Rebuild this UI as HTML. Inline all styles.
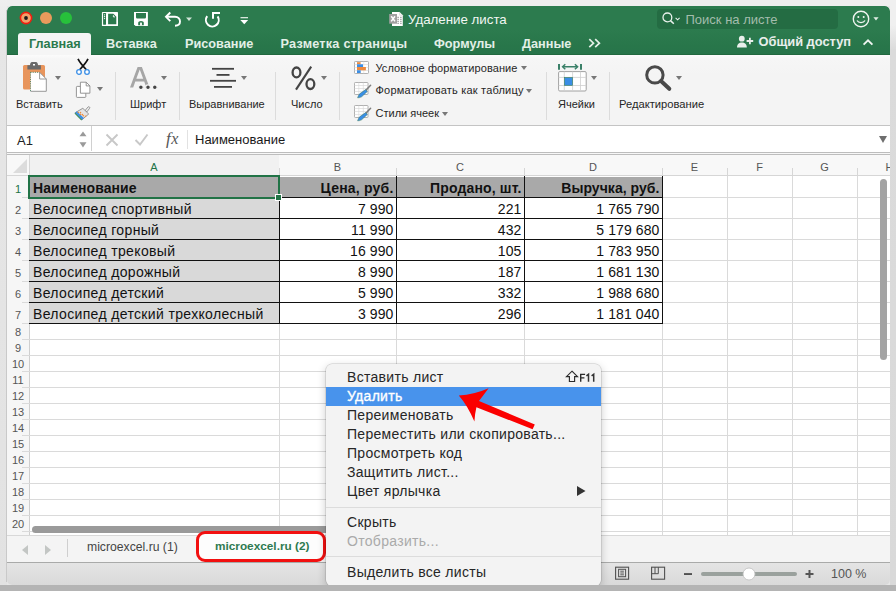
<!DOCTYPE html>
<html><head><meta charset="utf-8">
<style>
*{box-sizing:border-box;margin:0;padding:0}
html,body{width:896px;height:591px;overflow:hidden}
body{position:relative;background:#e6e6e6;font-family:"Liberation Sans",sans-serif;color:#222}
.a{position:absolute}
.t{position:absolute;white-space:nowrap;line-height:1}
#win{position:absolute;left:7px;top:6px;width:883px;height:579px;border-radius:5px;overflow:hidden;background:#f3f3f3}
#outbottom{position:absolute;left:0;top:585px;width:896px;height:6px;background:#b4b4b4}
#outleft{position:absolute;left:0;top:0;width:7px;height:591px;background:linear-gradient(#efefef 0px,#e6e6e6 40px,#e2e2e2 591px)}
#outtop{position:absolute;left:0;top:0;width:896px;height:6px;background:#eeeeee}
#outright{position:absolute;left:890px;top:0;width:6px;height:591px;background:linear-gradient(#f0f0f0 0px,#f0f0f0 25px,#dbdbdb 50px,#d9d9d9 591px)}
.green{background:#2b7a4d}
.tab{position:absolute;top:38px;font-size:12.7px;font-weight:bold;color:#e3efe7;white-space:nowrap;line-height:1}
.rib{position:absolute;font-size:11px;color:#262626;white-space:nowrap;line-height:1}
.sep{position:absolute;top:72px;width:1px;height:48px;background:#dcdcdc}
.dd{position:absolute;width:0;height:0;border-left:3px solid transparent;border-right:3px solid transparent;border-top:4.5px solid #777}
.vl{position:absolute;top:176px;width:1px;height:360px;background:#dadada}
.hl{position:absolute;left:22px;height:1px;width:868px;background:#dadada}
.rn{position:absolute;left:7px;width:22px;text-align:center;font-size:11px;color:#555;line-height:1}
.cell{position:absolute;font-size:14px;white-space:nowrap;line-height:1;color:#111;letter-spacing:0.35px}
.num{text-align:right;letter-spacing:0.1px}
.mi{position:absolute;left:347px;font-size:14px;color:#262626;white-space:nowrap;line-height:1;letter-spacing:0.3px}
</style></head><body>
<div id="outtop"></div><div id="outleft"></div><div id="outright"></div><div id="outbottom"></div><div class="a" style="left:6px;top:10px;width:1px;height:572px;background:#c9c9c9"></div>
<div id="wc" style="position:absolute;left:0;top:0;width:896px;height:591px;clip-path:inset(6px 6px 6px 7px round 5px)">
<div id="win">
  <!-- green header -->
  <div class="a" style="left:0;top:0;width:883px;height:49px;background:linear-gradient(#2c7b4e 0px,#2c7b4e 24px,#28764a 40px,#27744a 49px)"></div>
</div>

<!-- traffic lights -->
<svg class="a" style="left:18px;top:10px" width="60" height="16" viewBox="0 0 60 16">
  <circle cx="8" cy="8" r="5.6" fill="#f2a06a" stroke="#f01e10" stroke-width="1.6"/>
  <circle cx="8" cy="8" r="1.9" fill="#1a1a1a"/>
  <circle cx="28" cy="8" r="6" fill="#e99a5c"/>
  <circle cx="48" cy="8" r="6" fill="#27c03b"/>
</svg>
<!-- quick access icons -->
<svg class="a" style="left:100px;top:10px" width="152" height="18" viewBox="0 0 152 18">
  <!-- sidebar doc icon -->
  <rect x="1.9" y="2" width="16.1" height="14.1" rx="0.7" fill="#fff"/>
  <rect x="3.1" y="3.1" width="2.9" height="11.6" rx="0.4" fill="#2b7a4d"/>
  <circle cx="4.55" cy="4.8" r="0.65" fill="#fff"/><circle cx="4.55" cy="6.7" r="0.65" fill="#fff"/><circle cx="4.55" cy="8.6" r="0.65" fill="#fff"/>
  <path d="M8.1 3.8 H13.4 L16.3 6.7 V14.3 H8.1 Z" fill="#2b7a4d"/>
  <path d="M13.4 5.2 V6.9 H15" fill="none" stroke="#fff" stroke-width="0.9"/>
  <!-- save -->
  <path d="M34 2 H47.9 V16.1 H35.5 L34 14.6 Z" fill="#fff"/>
  <path d="M36 3 H46 V7 C46 8 45.3 8.6 44.5 8.6 H37.5 C36.7 8.6 36 8 36 7 Z" fill="#2b7a4d"/>
  <path d="M38.2 15.3 V12.8 C38.2 11.6 39.5 10.9 41 10.9 C42.5 10.9 43.8 11.6 43.8 12.8 V15.3 Z" fill="#2b7a4d"/>
  <rect x="40.1" y="12.6" width="1.8" height="2.8" fill="#fff"/>
  <!-- undo -->
  <path d="M66 6.8 H75 C78.2 6.8 80 9 80 11.6 C80 14.2 78.2 15.8 75 15.8" fill="none" stroke="#fff" stroke-width="1.9"/>
  <path d="M70.3 2.5 L66 6.8 L70.3 11.1" fill="none" stroke="#fff" stroke-width="1.9"/>
  <path d="M86 7.6 H92 L89 11 Z" fill="#d0e4d7"/>
  <!-- redo circular -->
  <path d="M107.2 6.2 A6.4 6.4 0 1 0 117.6 6.4" fill="none" stroke="#fff" stroke-width="2"/>
  <path d="M113 8.8 V3 H120" fill="none" stroke="#fff" stroke-width="2"/>
  <!-- customize -->
  <rect x="140.5" y="7" width="7.5" height="1.3" fill="#d7e7dc"/>
  <path d="M140.3 10 H148.2 L144.25 14.2 Z" fill="#fff"/>
</svg>

<!-- title -->
<svg class="a" style="left:388px;top:11px" width="16" height="16" viewBox="0 0 16 16">
  <path d="M4 0.9 H11.6 L14.8 4.2 V14.9 H4 Z" fill="#fff"/>
  <path d="M11.6 0.9 V4.2 H14.8" fill="none" stroke="#ccc" stroke-width="0.6"/>
  <g fill="#9a9a9a"><rect x="9.3" y="5.8" width="1.7" height="1"/><rect x="12" y="5.8" width="1.7" height="1"/><rect x="9.3" y="7.8" width="1.7" height="1"/><rect x="12" y="7.8" width="1.7" height="1"/><rect x="9.3" y="9.8" width="1.7" height="1"/><rect x="12" y="9.8" width="1.7" height="1"/><rect x="9.3" y="11.8" width="1.7" height="1"/><rect x="12" y="11.8" width="1.7" height="1"/></g>
  <rect x="1.2" y="3" width="7.8" height="9.7" fill="#a0a0a0"/>
  <path d="M3.2 5.3 L7 10.4 M7 5.3 L3.2 10.4" stroke="#fff" stroke-width="1.5"/>
</svg>
<div class="t" style="left:408px;top:13px;font-size:13.3px;color:#f2f7f3">Удаление листа</div>

<!-- search -->
<div class="a" style="left:657px;top:9px;width:181px;height:20px;border-radius:4px;background:#246c43"></div>
<svg class="a" style="left:660px;top:11px" width="22" height="16" viewBox="0 0 22 16">
  <circle cx="7.4" cy="6.4" r="4.4" fill="none" stroke="#e9f1ec" stroke-width="1.3"/>
  <path d="M10.5 9.6 L13.8 12.8" stroke="#e9f1ec" stroke-width="1.5"/>
  <path d="M15.6 6.8 L17.6 8.8 L19.6 6.8" fill="none" stroke="#e9f1ec" stroke-width="1.1"/>
</svg>
<div class="t" style="left:685.5px;top:13px;font-size:13px;color:#a3bcac">Поиск на листе</div>
<!-- smiley -->
<svg class="a" style="left:850px;top:9px" width="32" height="20" viewBox="0 0 32 20">
  <circle cx="11" cy="10" r="7.7" fill="none" stroke="#f0f5f1" stroke-width="1.4"/>
  <circle cx="8.3" cy="8" r="1" fill="#f0f5f1"/><circle cx="13.7" cy="8" r="1" fill="#f0f5f1"/>
  <path d="M7 11.5 C8.5 14.3 13.5 14.3 15 11.5" fill="none" stroke="#f0f5f1" stroke-width="1.3"/>
  <path d="M23.4 8.3 H28.6 L26 11.6 Z" fill="#e0ece4"/>
</svg>

<!-- tabs -->
<div class="a" style="left:7px;top:54px;width:883px;height:1px;background:#22683f"></div>
<div class="a" style="left:18px;top:33px;width:73px;height:23px;background:#f5f5f5;border-radius:3px 3px 0 0"></div>
<div class="tab" style="left:29px;color:#2b7a4d">Главная</div>
<div class="tab" style="left:106px">Вставка</div>
<div class="tab" style="left:185px">Рисование</div>
<div class="tab" style="left:280.5px;letter-spacing:0.22px">Разметка страницы</div>
<div class="tab" style="left:434px">Формулы</div>
<div class="tab" style="left:522px">Данные</div>
<svg class="a" style="left:587px;top:37px" width="16" height="12" viewBox="0 0 16 12">
  <path d="M2.3 2.2 L6.5 6.2 L2.3 10.2 M8.2 2.2 L12.4 6.2 L8.2 10.2" fill="none" stroke="#e3efe7" stroke-width="1.7"/>
</svg>
<svg class="a" style="left:736px;top:35px" width="20" height="16" viewBox="0 0 20 16">
  <circle cx="5.8" cy="3.7" r="2.9" fill="#e9efeb"/>
  <path d="M1 12.6 C1 9 3 7.4 5.9 7.4 C8.8 7.4 10.8 9 10.8 12.6 Z" fill="#e9efeb"/>
  <path d="M10.6 6 H17.2 M13.9 2.7 V9.3" stroke="#e9efeb" stroke-width="1.8"/>
</svg>
<div class="tab" style="left:758.5px;top:36.2px;font-size:12.85px;color:#e9efeb">Общий доступ</div>
<svg class="a" style="left:861px;top:37px" width="14" height="10" viewBox="0 0 14 10">
  <path d="M2.6 7.6 L7 3.3 L11.4 7.6" fill="none" stroke="#eef4f0" stroke-width="1.9"/>
</svg>

<!-- ribbon -->
<div class="a" style="left:7px;top:55px;width:883px;height:70px;background:linear-gradient(#fbfbfb 0px,#f6f6f6 4px,#f4f4f4 20px)"></div>
<div class="a" style="left:7px;top:125px;width:883px;height:1px;background:#c4c4c4"></div>
<div class="sep" style="left:115px"></div>
<div class="sep" style="left:179px"></div>
<div class="sep" style="left:275px"></div>
<div class="sep" style="left:339px"></div>
<div class="sep" style="left:546px"></div>
<div class="sep" style="left:609px"></div>

<!-- paste icon -->
<svg class="a" style="left:20px;top:60px" width="32" height="34" viewBox="0 0 32 34">
  <rect x="3" y="5" width="22" height="24.6" rx="1.5" fill="#e8955c"/>
  <path d="M7.4 5.2 H10 C10 3.5 10.8 2 12 2 H16 C17.2 2 18 3.5 18 5.2 H20.9 V9.6 H7.4 Z" fill="#6a6a6a"/>
  <rect x="13" y="4" width="2" height="1.5" fill="#fff"/>
  <path d="M10.5 12.3 H19.6 L26.3 19 V31.3 H10.5 Z" fill="#fff"/>
  <path d="M10.5 31.3 H26.3 V19 L19.6 12.3 V19 H26.3" fill="none" stroke="#8d8d8d" stroke-width="0.9"/>
  <path d="M10.5 12.3 V31 M10.5 12.3 H19.6" stroke="#3d7a5a" stroke-width="0.9" stroke-dasharray="1 1.2"/>
</svg>
<div class="dd" style="left:55px;top:75.8px"></div>
<div class="rib" style="left:16px;top:99px">Вставить</div>
<!-- scissors -->
<svg class="a" style="left:72px;top:57px" width="22" height="19" viewBox="0 0 22 19">
  <path d="M6 1.8 C7 4 9.5 7.5 14.6 13 M16 1.8 C15 4 12.5 7.5 7.4 13" fill="none" stroke="#111" stroke-width="1.7"/>
  <circle cx="7" cy="15" r="2.3" fill="#fff" stroke="#3a8ee6" stroke-width="1.3"/>
  <circle cx="15" cy="15" r="2.3" fill="#fff" stroke="#3a8ee6" stroke-width="1.3"/>
</svg>
<!-- copy -->
<svg class="a" style="left:74px;top:80px" width="20" height="19" viewBox="0 0 20 19">
  <rect x="2.4" y="6.4" width="9.4" height="11" rx="0.8" fill="#fff" stroke="#8a8a8a" stroke-width="0.9"/>
  <path d="M6.4 2.2 H12.2 L15.9 5.9 V13.2 H6.4 Z" fill="#fff" stroke="#8a8a8a" stroke-width="0.9"/>
  <path d="M12.2 2.2 V5.9 H15.9" fill="none" stroke="#8a8a8a" stroke-width="0.9"/>
</svg>
<div class="dd" style="left:97px;top:87px"></div>
<!-- brush -->
<svg class="a" style="left:73px;top:104px" width="20" height="18" viewBox="0 0 20 18">
  <path d="M12.2 6.4 L15 3 C15.8 2.1 17.4 3.3 16.6 4.3 L13.9 7.9 Z" fill="#efefef" stroke="#808080" stroke-width="0.8"/>
  <path d="M9.8 4.3 L15.7 10 L9 15.7 L2.2 8.7 Z" fill="#e4e4e4" stroke="#7d7d7d" stroke-width="0.8"/>
  <path d="M2.2 8.7 L9 15.7 L10.8 14.1 L3.9 7.2 Z" fill="#3b8fe8"/>
  <path d="M1.9 9.2 L8.7 16.2" stroke="#3d8a5a" stroke-width="1.1"/>
  <g fill="#ef8d3c"><circle cx="5.3" cy="8.5" r="0.8"/><circle cx="7.5" cy="8.5" r="0.8"/><circle cx="7.5" cy="10.4" r="0.8"/><circle cx="9.4" cy="10.6" r="0.8"/><circle cx="10.4" cy="11.7" r="0.8"/><circle cx="12.5" cy="12.3" r="0.8"/></g>
</svg>

<!-- font -->
<svg class="a" style="left:124px;top:60px" width="40" height="32" viewBox="124 60 40 32">
  <path fill-rule="evenodd" fill="#a6a6a6" d="M130 87.5 L137.6 67.1 H141.9 L149.5 87.5 H146.3 L144.2 81.5 H135.3 L133.2 87.5 Z M136.3 78.7 H143.2 L139.75 69.6 Z"/>
  <g fill="#454545" stroke="#f4f4f4" stroke-width="1.1"><circle cx="140.9" cy="87.2" r="2.3"/><circle cx="148" cy="87.2" r="2.3"/><circle cx="154.8" cy="87.2" r="2.3"/></g>
</svg>
<div class="dd" style="left:161px;top:75.8px"></div>
<div class="rib" style="left:130px;top:99px">Шрифт</div>

<!-- alignment -->
<svg class="a" style="left:208px;top:66px" width="30" height="24" viewBox="0 0 30 24">
  <rect x="4" y="1.9" width="22" height="1.8" fill="#444"/>
  <rect x="8.5" y="8" width="13" height="1.8" fill="#444"/>
  <rect x="2" y="13.9" width="26" height="1.8" fill="#444"/>
  <rect x="6" y="20" width="18" height="1.8" fill="#444"/>
</svg>
<div class="dd" style="left:241px;top:75.8px"></div>
<div class="rib" style="left:189px;top:99px">Выравнивание</div>

<!-- number -->
<svg class="a" style="left:286px;top:63px" width="34" height="30" viewBox="286 63 34 30">
  <ellipse cx="296.5" cy="72.4" rx="3.9" ry="4.9" fill="none" stroke="#444" stroke-width="2.3"/>
  <ellipse cx="310.4" cy="84.1" rx="3.9" ry="4.9" fill="none" stroke="#444" stroke-width="2.3"/>
  <path d="M311.2 66.6 L296 89.7" stroke="#444" stroke-width="2.1"/>
</svg>
<div class="dd" style="left:321px;top:75.8px"></div>
<div class="rib" style="left:291px;top:99px">Число</div>

<!-- styles -->
<svg class="a" style="left:353px;top:60px" width="18" height="15" viewBox="0 0 18 15">
  <rect x="1.5" y="1.5" width="14" height="12" rx="0.8" fill="#fff" stroke="#a8a8a8" stroke-width="0.9"/>
  <path d="M6.2 1.5 V13.5 M10.8 1.5 V13.5 M1.5 4.5 H15.5 M1.5 7.5 H15.5 M1.5 10.5 H15.5" stroke="#dadada" stroke-width="0.6"/>
  <rect x="4" y="2.2" width="3.6" height="2.1" fill="#ee8a3e"/>
  <rect x="4" y="4.3" width="6" height="2.7" fill="#3a8ee6"/>
  <rect x="4" y="7" width="8.9" height="3.3" fill="#ee8a3e"/>
  <rect x="4" y="10.3" width="3.7" height="2.7" fill="#3a8ee6"/>
</svg>
<div class="rib" style="left:375.5px;top:62.5px;letter-spacing:0.09px">Условное форматирование</div>
<div class="dd" style="left:521px;top:65.5px;border-left-width:3px;border-right-width:3px;border-top-width:4px"></div>
<svg class="a" style="left:353px;top:82px" width="19" height="17" viewBox="0 0 19 17">
  <rect x="1.5" y="0.5" width="13.5" height="12" rx="0.8" fill="#fff" stroke="#a8a8a8" stroke-width="0.9"/>
  <path d="M1.5 3.5 H15 M1.5 6.5 H15 M1.5 9.5 H15 M5.8 0.5 V12.5 M10.3 0.5 V12.5" stroke="#d5d5d5" stroke-width="0.6"/>
  <path d="M17.6 3.2 L12.6 8.6" stroke="#7d7d7d" stroke-width="1.5" stroke-linecap="round"/>
  <path d="M12.6 7.6 L14.4 9.4 L8.6 14.8 C7.2 15.6 5.6 15.9 4.6 15.8 C5 14.5 5.6 13.1 6.9 11.6 Z" fill="#3a8ee6" stroke="#3d7a5a" stroke-width="0.5"/>
</svg>
<div class="rib" style="left:375.5px;top:85.3px;letter-spacing:0.2px">Форматировать как таблицу</div>
<div class="dd" style="left:526px;top:89px;border-left-width:3px;border-right-width:3px;border-top-width:4px"></div>
<svg class="a" style="left:353px;top:105px" width="19" height="17" viewBox="0 0 19 17">
  <rect x="1.5" y="0.5" width="13.5" height="12" rx="0.8" fill="#fff" stroke="#a8a8a8" stroke-width="0.9"/>
  <path d="M1.5 3.5 H15 M1.5 6.5 H15 M1.5 9.5 H15 M5.8 0.5 V12.5 M10.3 0.5 V12.5" stroke="#d5d5d5" stroke-width="0.6"/>
  <path d="M17.6 3.2 L12.6 8.6" stroke="#7d7d7d" stroke-width="1.5" stroke-linecap="round"/>
  <path d="M12.6 7.6 L14.4 9.4 L8.6 14.8 C7.2 15.6 5.6 15.9 4.6 15.8 C5 14.5 5.6 13.1 6.9 11.6 Z" fill="#3a8ee6" stroke="#3d7a5a" stroke-width="0.5"/>
</svg>
<div class="rib" style="left:375.5px;top:108px">Стили ячеек</div>
<div class="dd" style="left:442px;top:112px;border-left-width:3px;border-right-width:3px;border-top-width:4px"></div>

<!-- cells -->
<svg class="a" style="left:556px;top:62px" width="34" height="32" viewBox="0 0 34 32">
  <path d="M3 2 V7.7 M25 2 V7.7" stroke="#3a8068" stroke-width="2"/>
  <path d="M7 4.8 H21.2" stroke="#3a8068" stroke-width="1.6"/>
  <path d="M9.3 2.3 L6.6 4.8 L9.3 7.3 M18.9 2.3 L21.6 4.8 L18.9 7.3" fill="none" stroke="#3a8068" stroke-width="1.5"/>
  <rect x="2.6" y="9.6" width="27.6" height="19.4" rx="1.2" fill="#fff" stroke="#a0a0a0" stroke-width="1"/>
  <path d="M2.6 15.4 H30.2 M2.6 23.5 H30.2 M8.3 9.6 V29 M16.6 9.6 V29 M24.5 9.6 V29" stroke="#cfcfcf" stroke-width="0.8"/>
  <rect x="8.5" y="15.6" width="7.9" height="7.7" fill="#3a8ee6" stroke="#3a8068" stroke-width="0.7"/>
</svg>
<div class="dd" style="left:591px;top:75.8px"></div>
<div class="rib" style="left:558px;top:99px">Ячейки</div>

<!-- editing -->
<svg class="a" style="left:643px;top:64px" width="30" height="28" viewBox="0 0 30 28">
  <circle cx="11.9" cy="10.9" r="8.2" fill="none" stroke="#4a4a4a" stroke-width="3"/>
  <path d="M18 17 L26.3 24.8" stroke="#4a4a4a" stroke-width="4" stroke-linecap="round"/>
</svg>
<div class="dd" style="left:676px;top:75.8px"></div>
<div class="rib" style="left:619px;top:99px;font-size:11.2px">Редактирование</div>

<!-- formula bar -->
<div class="a" style="left:7px;top:126px;width:883px;height:27px;background:#fff"></div>
<div class="a" style="left:7px;top:152px;width:883px;height:3px;background:#bdbdbd;border-top:1px solid #bdbdbd;border-bottom:1px solid #bdbdbd;background:#f7f7f7"></div>
<div class="a" style="left:91px;top:126px;width:1px;height:25px;background:#d0d0d0"></div>
<div class="t" style="left:17px;top:134px;font-size:13px;color:#222">A1</div>
<svg class="a" style="left:77px;top:128px" width="12" height="22" viewBox="0 0 12 22">
  <path d="M2.5 8.2 L6 3.5 L9.5 8.2 Z M2.5 14.3 L6 19.5 L9.5 14.3 Z" fill="#9a9a9a"/>
</svg>
<svg class="a" style="left:105px;top:133px" width="60" height="14" viewBox="0 0 60 14">
  <path d="M1.5 1.5 L12.5 12.5 M12.5 1.5 L1.5 12.5" stroke="#c8c8c8" stroke-width="1.9"/>
  <path d="M30.5 7 L35 11.5 L42.5 1.5" fill="none" stroke="#c8c8c8" stroke-width="1.9"/>
</svg>
<div class="t" style="left:166px;top:130px;font-size:17px;font-family:'Liberation Serif',serif;font-style:italic;color:#555">f<span style="font-size:16px;margin-left:0.5px">x</span></div>
<div class="a" style="left:187px;top:130px;width:1px;height:19px;background:#e2e2e2"></div>
<div class="t" style="left:195px;top:133px;font-size:13px;color:#1a1a1a">Наименование</div>
<div class="a" style="left:879px;top:136px;width:0;height:0;border-left:4.5px solid transparent;border-right:4.5px solid transparent;border-top:7px solid #6e6e6e"></div>

<!-- column header -->
<div class="a" style="left:7px;top:155px;width:883px;height:21px;background:#f8f8f8"></div>
<div class="a" style="left:30px;top:155px;width:249px;height:21px;background:#f1f1f1"></div>
<div class="a" style="left:7px;top:175px;width:883px;height:1px;background:#d6d6d6"></div>
<svg class="a" style="left:12px;top:158px" width="16" height="16" viewBox="0 0 16 16"><path d="M1 15 L15 15 L15 1 Z" fill="#dcdcdc"/></svg>
<div class="a" style="left:29px;top:155px;width:1px;height:21px;background:#d6d6d6"></div>

<div class="t" style="left:29px;width:250px;text-align:center;top:161.5px;font-size:11px;color:#217346">A</div>
<div class="t" style="left:279px;width:117px;text-align:center;top:161.5px;font-size:11px;color:#555">B</div>
<div class="t" style="left:396px;width:128px;text-align:center;top:161.5px;font-size:11px;color:#555">C</div>
<div class="t" style="left:524px;width:138px;text-align:center;top:161.5px;font-size:11px;color:#555">D</div>
<div class="t" style="left:662px;width:65px;text-align:center;top:161.5px;font-size:11px;color:#555">E</div>
<div class="t" style="left:727px;width:65px;text-align:center;top:161.5px;font-size:11px;color:#555">F</div>
<div class="t" style="left:792px;width:65px;text-align:center;top:161.5px;font-size:11px;color:#555">G</div>
<div class="t" style="left:857px;width:65px;text-align:center;top:161.5px;font-size:11px;color:#555">H</div>
<!-- grid body -->
<div class="a" style="left:7px;top:176px;width:22px;height:360px;background:#f6f6f6"></div>
<div class="a" style="left:29px;top:176px;width:861px;height:360px;background:#fff"></div>
<div id="grid">
<div class="a" style="left:29px;top:176px;width:1px;height:360px;background:#cfcfcf"></div>
<div class="rn" style="top:183.5px;color:#217346">1</div>
<div class="rn" style="top:204.5px;color:#555">2</div>
<div class="rn" style="top:225.5px;color:#555">3</div>
<div class="rn" style="top:246.5px;color:#555">4</div>
<div class="rn" style="top:267.5px;color:#555">5</div>
<div class="rn" style="top:288.5px;color:#555">6</div>
<div class="rn" style="top:309.5px;color:#555">7</div>
<div class="rn" style="top:326.7px;color:#555">8</div>
<div class="rn" style="top:342.7px;color:#555">9</div>
<div class="rn" style="top:358.7px;color:#555">10</div>
<div class="rn" style="top:374.7px;color:#555">11</div>
<div class="rn" style="top:390.7px;color:#555">12</div>
<div class="rn" style="top:406.7px;color:#555">13</div>
<div class="rn" style="top:422.7px;color:#555">14</div>
<div class="rn" style="top:438.7px;color:#555">15</div>
<div class="rn" style="top:454.7px;color:#555">16</div>
<div class="rn" style="top:470.7px;color:#555">17</div>
<div class="rn" style="top:486.7px;color:#555">18</div>
<div class="rn" style="top:502.7px;color:#555">19</div>
<div class="rn" style="top:518.7px;color:#555">20</div>
<div class="hl" style="top:197px"></div>
<div class="hl" style="top:218px"></div>
<div class="hl" style="top:239px"></div>
<div class="hl" style="top:260px"></div>
<div class="hl" style="top:281px"></div>
<div class="hl" style="top:302px"></div>
<div class="hl" style="top:323px"></div>
<div class="hl" style="top:339px"></div>
<div class="hl" style="top:355px"></div>
<div class="hl" style="top:371px"></div>
<div class="hl" style="top:387px"></div>
<div class="hl" style="top:403px"></div>
<div class="hl" style="top:419px"></div>
<div class="hl" style="top:435px"></div>
<div class="hl" style="top:451px"></div>
<div class="hl" style="top:467px"></div>
<div class="hl" style="top:483px"></div>
<div class="hl" style="top:499px"></div>
<div class="hl" style="top:515px"></div>
<div class="hl" style="top:531px"></div>
<div class="vl" style="left:279px"></div>
<div class="vl" style="left:396px"></div>
<div class="vl" style="left:524px"></div>
<div class="vl" style="left:662px"></div>
<div class="vl" style="left:727px"></div>
<div class="vl" style="left:792px"></div>
<div class="vl" style="left:857px"></div>
<div class="a" style="left:279px;top:168px;width:1px;height:8px;background:#d6d6d6"></div>
<div class="a" style="left:396px;top:168px;width:1px;height:8px;background:#d6d6d6"></div>
<div class="a" style="left:524px;top:168px;width:1px;height:8px;background:#d6d6d6"></div>
<div class="a" style="left:662px;top:168px;width:1px;height:8px;background:#d6d6d6"></div>
<div class="a" style="left:727px;top:168px;width:1px;height:8px;background:#d6d6d6"></div>
<div class="a" style="left:792px;top:168px;width:1px;height:8px;background:#d6d6d6"></div>
<div class="a" style="left:857px;top:168px;width:1px;height:8px;background:#d6d6d6"></div>
</div>
<div id="cells">
<div class="a" style="left:30px;top:177px;width:632px;height:20px;background:#a9a9a9"></div>
<div class="a" style="left:30px;top:198px;width:249px;height:125px;background:#d9d9d9"></div>
<div class="a" style="left:29px;top:197px;width:634px;height:1px;background:#111"></div>
<div class="a" style="left:29px;top:218px;width:634px;height:1px;background:#111"></div>
<div class="a" style="left:29px;top:239px;width:634px;height:1px;background:#111"></div>
<div class="a" style="left:29px;top:260px;width:634px;height:1px;background:#111"></div>
<div class="a" style="left:29px;top:281px;width:634px;height:1px;background:#111"></div>
<div class="a" style="left:29px;top:302px;width:634px;height:1px;background:#111"></div>
<div class="a" style="left:29px;top:323px;width:634px;height:1px;background:#111"></div>
<div class="a" style="left:279px;top:176px;width:1px;height:148px;background:#111"></div>
<div class="a" style="left:396px;top:176px;width:1px;height:148px;background:#111"></div>
<div class="a" style="left:524px;top:176px;width:1px;height:148px;background:#111"></div>
<div class="a" style="left:662px;top:176px;width:1px;height:148px;background:#111"></div>
<div class="cell" style="left:33px;top:180.8px;font-weight:bold;letter-spacing:0.08px;">Наименование</div>
<div class="cell num" style="right:502.5px;top:180.8px;font-weight:bold;letter-spacing:0.2px;">Цена, руб.</div>
<div class="cell num" style="right:374.5px;top:180.8px;font-weight:bold;letter-spacing:0.15px;">Продано, шт.</div>
<div class="cell num" style="right:236.5px;top:180.8px;font-weight:bold;letter-spacing:0.05px;">Выручка, руб.</div>
<div class="cell" style="left:33px;top:201.8px;">Велосипед спортивный</div>
<div class="cell num" style="right:502.5px;top:201.8px;">7 990</div>
<div class="cell num" style="right:374.5px;top:201.8px;">221</div>
<div class="cell num" style="right:236.5px;top:201.8px;">1 765 790</div>
<div class="cell" style="left:33px;top:222.8px;">Велосипед горный</div>
<div class="cell num" style="right:502.5px;top:222.8px;">11 990</div>
<div class="cell num" style="right:374.5px;top:222.8px;">432</div>
<div class="cell num" style="right:236.5px;top:222.8px;">5 179 680</div>
<div class="cell" style="left:33px;top:243.8px;">Велосипед трековый</div>
<div class="cell num" style="right:502.5px;top:243.8px;">16 990</div>
<div class="cell num" style="right:374.5px;top:243.8px;">105</div>
<div class="cell num" style="right:236.5px;top:243.8px;">1 783 950</div>
<div class="cell" style="left:33px;top:264.8px;">Велосипед дорожный</div>
<div class="cell num" style="right:502.5px;top:264.8px;">8 990</div>
<div class="cell num" style="right:374.5px;top:264.8px;">187</div>
<div class="cell num" style="right:236.5px;top:264.8px;">1 681 130</div>
<div class="cell" style="left:33px;top:285.8px;">Велосипед детский</div>
<div class="cell num" style="right:502.5px;top:285.8px;">5 990</div>
<div class="cell num" style="right:374.5px;top:285.8px;">332</div>
<div class="cell num" style="right:236.5px;top:285.8px;">1 988 680</div>
<div class="cell" style="left:33px;top:306.8px;">Велосипед детский трехколесный</div>
<div class="cell num" style="right:502.5px;top:306.8px;">3 990</div>
<div class="cell num" style="right:374.5px;top:306.8px;">296</div>
<div class="cell num" style="right:236.5px;top:306.8px;">1 181 040</div>
<div class="a" style="left:28px;top:175px;width:252px;height:24px;border:2px solid #217346"></div>
<div class="a" style="left:275px;top:194px;width:7px;height:7px;background:#217346;border:1px solid #fff"></div>
</div>

<!-- scrollbars -->
<div class="a" style="left:880px;top:179px;width:7px;height:181px;border-radius:3.5px;background:#a3a3a3"></div>
<div class="a" style="left:32px;top:526px;width:560px;height:7px;border-radius:3.5px;background:#9a9a9a"></div>

<!-- tab bar -->
<div class="a" style="left:7px;top:536px;width:883px;height:27px;background:#f4f4f4"></div>
<div class="a" style="left:7px;top:535px;width:883px;height:1px;background:#d8d8d8"></div>
<div class="a" style="left:7px;top:562px;width:883px;height:1px;background:#a9aaa9"></div>
<svg class="a" style="left:18px;top:543px" width="40" height="14" viewBox="0 0 40 14">
  <path d="M10 2 L4 7 L10 12 Z" fill="#c3c6c4"/>
  <path d="M27 2 L33 7 L27 12 Z" fill="#c3c6c4"/>
</svg>
<div class="a" style="left:67px;top:539px;width:1px;height:18px;background:#cfcfcf"></div>
<div class="t" style="left:87px;top:541px;font-size:12.2px;color:#444">microexcel.ru (1)</div>
<div class="a" style="left:197px;top:532px;width:128px;height:30px;background:#fdfdfd;border-radius:8px"></div>
<div class="t" style="left:215px;top:541px;font-size:11.8px;font-weight:bold;color:#2e7a50">microexcel.ru (2)</div>
<div class="a" style="left:196px;top:531px;width:130px;height:31px;border:3px solid #f21010;border-radius:9px"></div>

<!-- status bar -->
<div class="a" style="left:7px;top:563px;width:883px;height:22px;background:linear-gradient(#e4e4e4,#d9d9d9)"></div>
<svg class="a" style="left:612px;top:565px" width="260" height="18" viewBox="0 0 260 18">
  <rect x="3.6" y="2.2" width="13" height="12" fill="none" stroke="#505050" stroke-width="1.1"/>
  <rect x="6.6" y="4.3" width="7" height="7.4" fill="none" stroke="#505050" stroke-width="1"/>
  <path d="M8.3 6.2 H11.9 M8.3 8 H11.9 M8.3 9.8 H11.9" stroke="#505050" stroke-width="0.9"/>
  <rect x="39.6" y="2.2" width="13" height="12" fill="none" stroke="#505050" stroke-width="1.1"/>
  <path d="M43 2.2 V8.7 M46.3 2.2 V8.7 H39.6" fill="none" stroke="#505050" stroke-width="1"/>
  <rect x="72" y="8.1" width="8" height="1.9" fill="#505050"/>
  <rect x="89" y="7" width="96" height="4" rx="2" fill="#9aa19d"/>
  <circle cx="137" cy="9" r="6" fill="#fff" stroke="#bdbdbd" stroke-width="0.8"/>
  <path d="M193.5 9 H201.5 M197.5 5 V13" stroke="#555" stroke-width="2"/>
</svg>
<div class="t" style="left:831px;top:568px;font-size:12.5px;color:#555">100 %</div>

<!-- context menu -->
<div class="a" style="left:326px;top:364px;width:275px;height:222px;background:#f3f3f3;border-radius:6px;box-shadow:0 0 0 0.5px rgba(0,0,0,0.18),0 3px 10px rgba(0,0,0,0.22)"></div>
<div class="a" style="left:326px;top:387px;width:275px;height:19px;background:#4893ec"></div>
<div class="a" style="left:326px;top:507px;width:275px;height:1px;background:#dcdcdc"></div>
<div class="a" style="left:326px;top:556px;width:275px;height:1px;background:#dcdcdc"></div>
<div class="mi" style="top:370px">Вставить лист</div>
<div class="mi" style="top:389px;color:#fff;-webkit-text-stroke:0.35px #fff">Удалить</div>
<div class="mi" style="top:408px">Переименовать</div>
<div class="mi" style="top:427px">Переместить или скопировать...</div>
<div class="mi" style="top:446px">Просмотреть код</div>
<div class="mi" style="top:465px">Защитить лист...</div>
<div class="mi" style="top:484px">Цвет ярлычка</div>
<div class="mi" style="top:515px">Скрыть</div>
<div class="mi" style="top:534px;color:#aaa">Отобразить...</div>
<div class="mi" style="top:565px">Выделить все листы</div>
<svg class="a" style="left:560px;top:366px" width="40" height="22" viewBox="0 0 40 22">
  <path d="M12 5.2 L17.5 10.6 H14.6 V15.5 H9.4 V10.6 H6.5 Z" fill="none" stroke="#2a2a2a" stroke-width="1.15" stroke-linejoin="miter"/>
  <path d="M20.7 15.8 V8.4 H25.1 M20.7 11.9 H24.4" fill="none" stroke="#2a2a2a" stroke-width="1.4"/>
  <path d="M26.4 9.8 L28.5 8.3 V15.8 M31.6 9.8 L33.7 8.3 V15.8" fill="none" stroke="#333" stroke-width="1.5"/>
</svg>
<svg class="a" style="left:575px;top:485px" width="12" height="12" viewBox="0 0 12 12"><path d="M2 1 L10.5 6 L2 11 Z" fill="#333"/></svg>

<!-- red arrow -->
<svg class="a" style="left:0;top:0" width="896" height="591" viewBox="0 0 896 591">
  <path d="M458.8 395.6 Q474.5 394.4 488.6 388.2 L479 400.9 L534.8 424.6 L532.6 429.2 L476.4 407.3 Q474.9 413.5 474.4 421.6 Q467.5 405.5 458.8 395.6 Z" fill="#fb0000"/>
</svg>

</div>
</body></html>
